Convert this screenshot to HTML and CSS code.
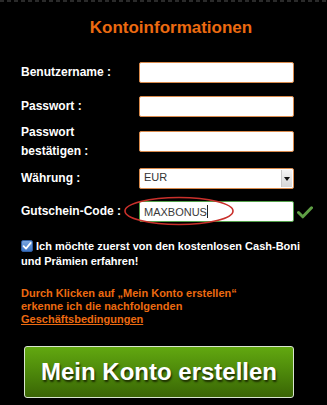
FILE: index.html
```html
<!DOCTYPE html>
<html lang="de">
<head>
<meta charset="utf-8">
<title>Kontoinformationen</title>
<link rel="stylesheet" href="styles.css">
</head>
<body>
<div class="page">
  <div class="dashes"></div>
  <h1 class="title">Kontoinformationen</h1>
  <form class="form">
    <div class="row r1">
      <label class="label">Benutzername :</label>
      <input class="field" type="text">
    </div>
    <div class="row r2">
      <label class="label">Passwort :</label>
      <input class="field" type="password">
    </div>
    <div class="row r3">
      <label class="label two">Passwort<br>bestätigen :</label>
      <input class="field" type="password">
    </div>
    <div class="row r4">
      <label class="label">Währung :</label>
      <div class="select">
        <span class="select-value">EUR</span>
        <span class="select-btn"><span class="tri"></span></span>
      </div>
    </div>
    <div class="row r5">
      <label class="label">Gutschein-Code :</label>
      <div class="code-wrap">
        <div class="field code"><span class="code-text">MAXBONUS</span><span class="caret"></span></div>
        <svg class="ellipse" width="112" height="30" viewBox="0 0 112 30"><ellipse cx="56" cy="15" rx="54" ry="13.5" fill="none" stroke="#c9302b" stroke-width="1.6"/></svg>
      </div>
      <svg class="check" width="16" height="13" viewBox="0 0 16 13"><path d="M1.5 6.5 L5.8 10.8 L14.5 1.8" fill="none" stroke="#5f9f45" stroke-width="3" stroke-linecap="round" stroke-linejoin="round"/></svg>
    </div>
  </form>
  <p class="optin"><span class="cb"><svg width="12" height="12" viewBox="0 0 12 12"><path d="M2.6 6.2 L5 8.6 L9.6 3" fill="none" stroke="#fff" stroke-width="1.8" stroke-linecap="round" stroke-linejoin="round"/></svg></span> Ich möchte zuerst von den kostenlosen Cash-Boni und Prämien erfahren!</p>
  <p class="terms">Durch Klicken auf „Mein Konto erstellen“<br>erkenne ich die nachfolgenden<br><a class="terms-link" href="#">Geschäftsbedingungen</a></p>
  <div class="btn-wrap"><button class="btn" type="button">Mein Konto erstellen</button></div>
</div>
</body>
</html>
```
FILE: styles.css
```css
* { box-sizing: border-box; }
html, body { margin: 0; padding: 0; background: #000; }
body { font-family: "Liberation Sans", Arial, Helvetica, sans-serif; color: #fff; }
.page { width: 327px; height: 405px; overflow: hidden; }
.dashes {
  height: 2px;
  background: repeating-linear-gradient(90deg, #2a2a2a 0 4px, #000 4px 7px);
}
.title {
  margin: 16px 0 0;
  padding-left: 15px;
  text-align: center;
  font-size: 17px;
  line-height: 20px;
  font-weight: bold;
  color: #ec6a10;
}
.form { margin: 24px 0 0; padding-left: 21px; }
.row { display: flex; align-items: center; height: 21px; }
.r1 { margin-bottom: 13px; }
.r2 { margin-bottom: 14px; }
.r3 { margin-bottom: 16px; }
.r4 { margin-bottom: 12px; }
.label {
  width: 118px;
  flex: none;
  font-size: 12px;
  font-weight: bold;
  line-height: 19px;
  white-space: nowrap;
}
.field {
  width: 155px;
  height: 21px;
  margin: 0;
  border: 1px solid #d98a4c;
  border-radius: 2px;
  background: #fff;
  font: 11px "Liberation Sans", Arial, sans-serif;
  padding: 0 4px;
  outline: none;
}
.select {
  width: 155px;
  height: 21px;
  border: 1px solid #d98a4c;
  border-radius: 2px;
  background: #fff;
  display: flex;
  align-items: center;
  padding: 0 1px 0 4px;
}
.select-value { flex: 1; font-size: 11px; color: #333; margin-top: -3px; }
.select-btn {
  width: 11px;
  height: 17px;
  background: linear-gradient(#f4f4f4, #d6d6d6);
  border-left: 1px solid #c8c8c8;
  display: flex;
  align-items: center;
  justify-content: center;
}
.tri {
  width: 0; height: 0;
  border-left: 3px solid transparent;
  border-right: 3px solid transparent;
  border-top: 4px solid #111;
}
.code-wrap { position: relative; width: 155px; height: 21px; }
.code {
  display: flex;
  align-items: center;
  border-color: #52a049;
  color: #333;
}
.code-text { font-size: 11px; color: #3a3a3a; }
.caret { width: 1px; height: 13px; background: #222; }
.ellipse { position: absolute; left: -16px; top: -5px; pointer-events: none; }
.check { margin-left: 3px; margin-top: 1px; }
.optin {
  margin: 17px 0 0;
  padding: 0 20px 0 21px;
  font-size: 11px;
  font-weight: bold;
  line-height: 15px;
}
.cb {
  display: inline-block;
  vertical-align: -2px;
  width: 12px;
  height: 12px;
  border-radius: 2px;
  background: linear-gradient(#7aa6e0, #3c74c4);
  border: 1px solid #2f5da0;
  position: relative;
}
.cb svg { position: absolute; left: -1px; top: -1px; }
.terms {
  margin: 18px 0 0;
  padding-left: 21px;
  font-size: 11px;
  font-weight: bold;
  line-height: 13px;
  color: #ec6a10;
}
.terms-link { color: #ec6a10; text-decoration: underline; }
.btn-wrap { padding: 20px 0 0 24px; }
.btn {
  width: 270px;
  height: 52px;
  border: 1px solid #d9e6cf;
  border-radius: 3px;
  background: linear-gradient(#62a810, #4b850a 55%, #3a6505);
  color: #fff;
  font: bold 24px "Liberation Sans", Arial, sans-serif;
  text-shadow: 1px 2px 2px #1a2a00;
  padding: 0;
  cursor: pointer;
}
```
